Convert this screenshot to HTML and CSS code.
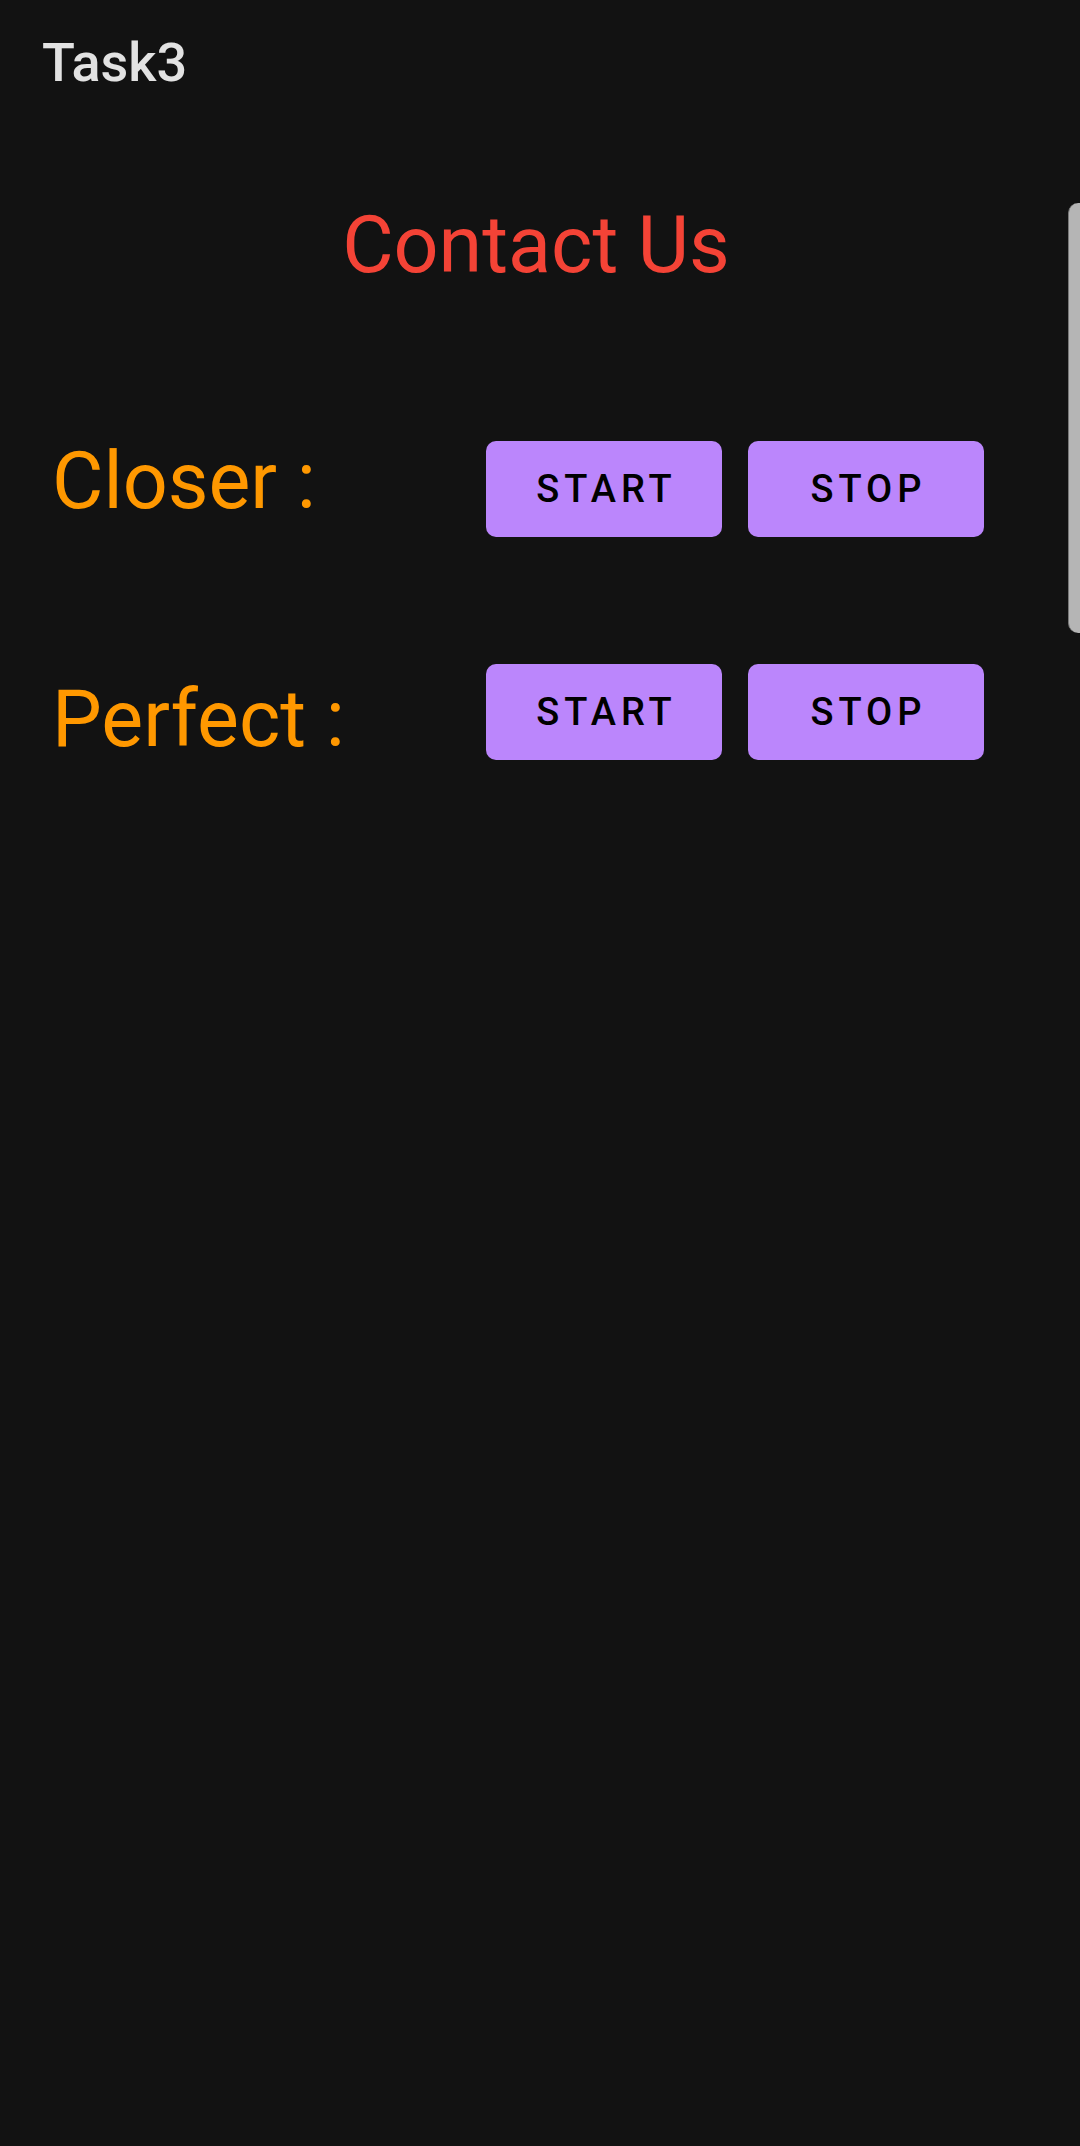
FILE: index.html
```html
<!DOCTYPE html>
<html>
<head>
<meta charset="utf-8">
<link rel="stylesheet" href="styles.css">
</head>
<body>
<div class="app">
  <div class="toolbar">Task3</div>
  <h1 class="title">Contact Us</h1>
  <div class="row row-first">
    <div class="label label-up">Closer :</div>
    <div class="buttons">
      <button class="btn">START</button>
      <button class="btn">STOP</button>
    </div>
  </div>
  <div class="row">
    <div class="label label-down">Perfect :</div>
    <div class="buttons">
      <button class="btn">START</button>
      <button class="btn">STOP</button>
    </div>
  </div>
  <div class="scrollbar"></div>
</div>
</body>
</html>
```

FILE: styles.css
```css
html, body {
  margin: 0;
  padding: 0;
  background: #121212;
}
.app {
  position: relative;
  width: 1080px;
  height: 2146px;
  background: #121212;
  font-family: Roboto, "Noto Sans", sans-serif;
  overflow: hidden;
}
.toolbar {
  padding: 30px 0 0 42px;
  height: 80px;
  font-size: 54px;
  font-weight: 500;
  color: #e2e2e2;
  line-height: 66px;
}
.title {
  margin: 88px 0 0 0;
  padding-right: 8px;
  text-align: center;
  font-size: 79px;
  font-weight: 400;
  color: #f44336;
  line-height: 94px;
}
.row {
  display: flex;
  align-items: center;
  padding-left: 52px;
  margin-top: 127px;
}
.row-first {
  margin-top: 149px;
}
.label {
  width: 434px;
  font-size: 79px;
  color: #ff9800;
  line-height: 96px;
}
.label-up {
  margin-top: -16px;
}
.label-down {
  margin-bottom: -14px;
}
.buttons {
  display: flex;
  gap: 26px;
}
.btn {
  width: 236px;
  height: 96px;
  border: none;
  border-radius: 10px;
  background: #bb86fc;
  color: #000;
  font-family: Roboto, "Noto Sans", sans-serif;
  font-size: 38px;
  font-weight: 500;
  letter-spacing: 5px;
  padding: 0 0 0 5px;
}
.scrollbar {
  position: absolute;
  right: 0;
  top: 203px;
  width: 11px;
  height: 430px;
  background: #b5b5b5;
  border-left: 1px solid #777;
  border-radius: 10px 0 0 10px;
}
```
